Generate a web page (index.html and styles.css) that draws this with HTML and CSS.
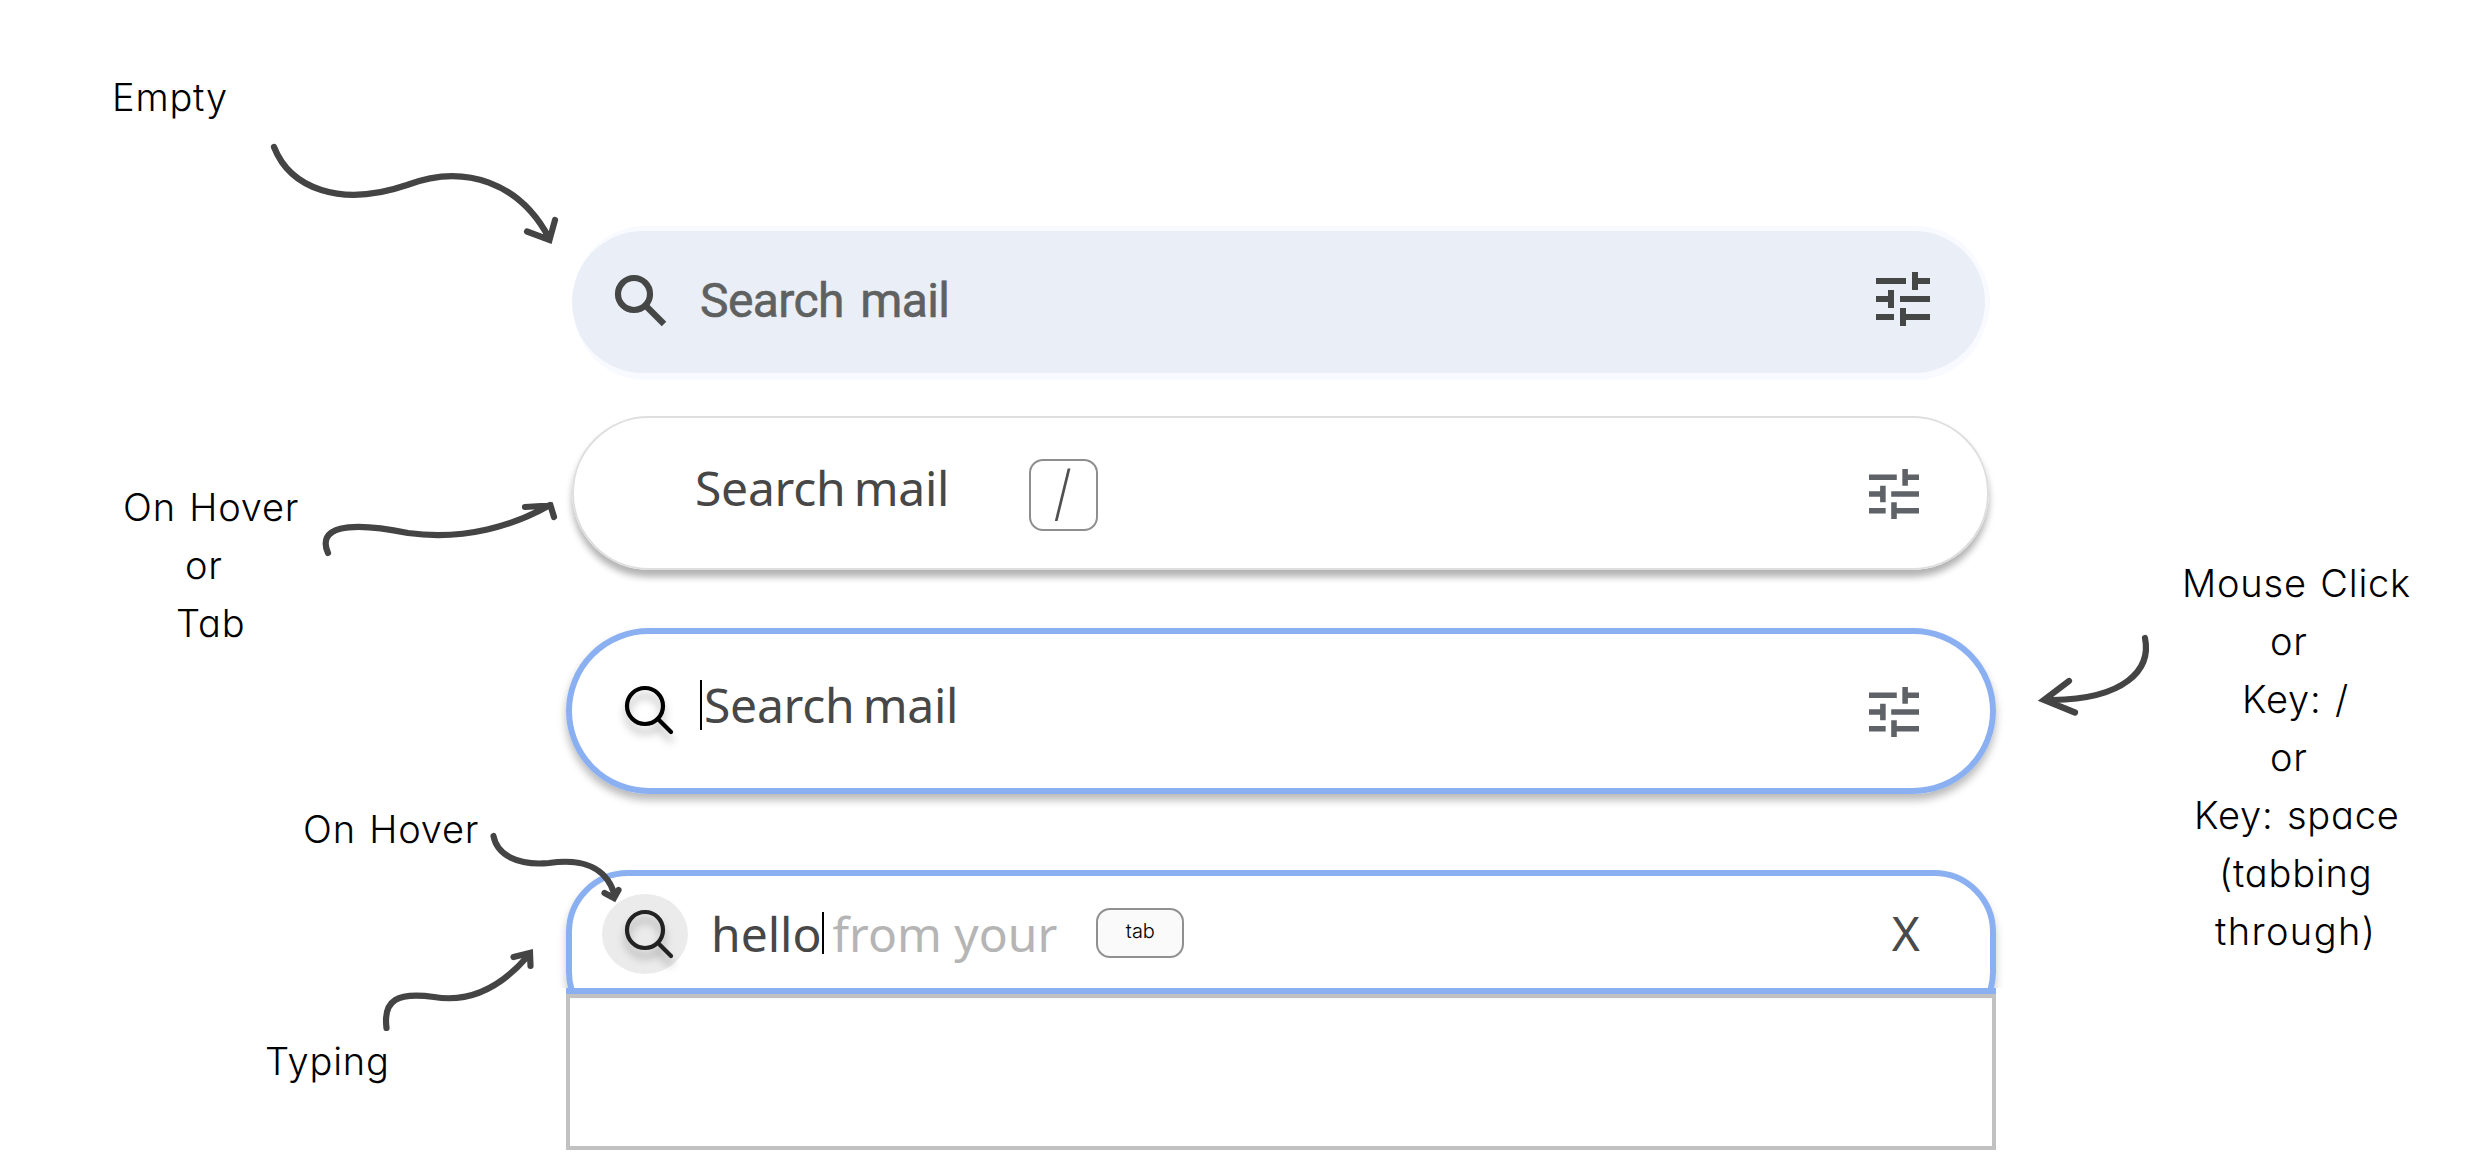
FILE: index.html
```html
<!DOCTYPE html>
<html lang="en">
<head>
<meta charset="utf-8">
<title>Search bar states</title>
<link rel="stylesheet" href="styles.css">
</head>
<body>
<main class="states">
  <div class="bar bar-empty">
    <svg class="icon-search-bold" width="54" height="54" viewBox="0 0 54 54"><circle cx="20" cy="20" r="16" fill="none" stroke="#444746" stroke-width="6.2"/><path d="M31 31 50 50" stroke="#444746" stroke-width="6.4"/></svg>
    <span class="hint hint-empty">Search mail</span>
    <svg class="tune tune-dark" width="54" height="54" viewBox="0 0 18 18"><path d="M0 2h10v2H0zM12 0h2v2h4v2h-4v2h-2zM4 6h2v6H4v-2H0V8h4zM8 8h10v2H8zM0 14h6v2H0zM8 12h2v2h8v2h-8v2H8z"/></svg>
  </div>
  <div class="bar bar-hover">
    <span class="hint hint-hover">Search mail</span>
    <kbd class="key key-slash"><span class="slash">/</span></kbd>
    <svg class="tune" width="50" height="50" viewBox="0 0 18 18"><path d="M0 2h10v2H0zM12 0h2v2h4v2h-4v2h-2zM4 6h2v6H4v-2H0V8h4zM8 8h10v2H8zM0 14h6v2H0zM8 12h2v2h8v2h-8v2H8z"/></svg>
  </div>
  <div class="bar bar-focus">
    <svg class="icon-search" width="50" height="50" viewBox="0 0 50 50"><circle cx="21" cy="21" r="18"/><path d="m34 34 13 13"/></svg>
    <i class="caret caret-tall"></i>
    <span class="hint hint-focus">Search mail</span>
    <svg class="tune" width="50" height="50" viewBox="0 0 18 18"><path d="M0 2h10v2H0zM12 0h2v2h4v2h-4v2h-2zM4 6h2v6H4v-2H0V8h4zM8 8h10v2H8zM0 14h6v2H0zM8 12h2v2h8v2h-8v2H8z"/></svg>
  </div>
  <div class="typing">
    <div class="clip">
      <div class="bar bar-typing">
        <span class="halo"><svg class="icon-search soft" width="50" height="50" viewBox="0 0 50 50"><circle cx="21" cy="21" r="18"/><path d="m34 34 13 13"/></svg></span>
        <span class="typed">hello</span>
        <i class="caret"></i>
        <span class="ghost">from your</span>
        <kbd class="key key-tab">tab</kbd>
        <span class="clear">X</span>
      </div>
    </div>
    <div class="results"></div>
  </div>
</main>

<p class="note n-empty">Empty</p>
<p class="note n-hover">On Hover</p>
<p class="note n-hover-or">or</p>
<p class="note n-hover-tab">Tab</p>
<p class="note n-icon">On Hover</p>
<p class="note n-typing">Typing</p>
<p class="note n-click">Mouse Click</p>
<p class="note n-click-or">or</p>
<p class="note n-slash">Key: /</p>
<p class="note n-slash-or">or</p>
<p class="note n-space">Key: space</p>
<p class="note n-tabbing">(tabbing</p>
<p class="note n-through">through)</p>

<svg class="arrows" width="2466" height="1168" viewBox="0 0 2466 1168">
  <path d="M274 147C290 188 340 208 407 185C465 163 520 183 549 238M527 231.500 549.500 240 555 220"/>
  <path d="M328 553C317 528 345 520 408 533C465 541 515 525 550 505M525 507 550.500 505.500 554 517"/>
  <path d="M493.500 836C497 855 518 866 549 863C583 858 606 868 614 893M604.500 893 614 898 618.500 890"/>
  <path d="M386.500 1028C383 1000 397 992 434 997C470 1003 500 988 527 957M513.500 957 530 953 530.500 966"/>
  <path d="M2078.500 638C2085 670 2058 699 1986 700" transform="translate(66.500 0)"/>
  <path d="M2069 681 2044 700 2075 712.500"/>
</svg>
</body>
</html>
```
FILE: styles.css
```css
* { box-sizing: border-box; }
body { margin: 0; width: 2466px; height: 1168px; position: relative; overflow: hidden; background: #fff; font-family: "Noto Sans", sans-serif; }
.states { width: 1430px; margin-left: 566px; padding-top: 230px; display: flex; flex-direction: column; align-items: flex-start; }
.bar { display: flex; align-items: flex-start; border-radius: 80px; }
.bar svg, .bar span, .bar kbd, .caret { flex: none; }
.tune { fill: #5f6368; margin-left: auto; display: block; }
.tune-dark { fill: #444746; }
.hint { font-size: 48px; line-height: 66px; letter-spacing: -.25px; color: #474747; white-space: pre; }
.bar-empty { width: 1413px; height: 142px; margin: 1px 0 0 6px; padding: 41px 55px 0 42px; background: #e9eef7; box-shadow: 5px 0 #f8faff, 2px -5px #f8faff, 2px 7px #f8faff; }
.icon-search-bold { margin-top: 2px; }
.hint-empty { margin: -4px 0 0 32px; font-family: Roboto, sans-serif; letter-spacing: -.6px; word-spacing: 5px; color: #5f6160; -webkit-text-stroke: .6px #5f6160; }
.bar-hover { width: 1417px; height: 154px; margin: 43px 0 0 6px; padding: 0 68px 0 121px; border: 2px solid #dedede; box-shadow: 0 7px 7px rgba(0,0,0,.3); }
.hint-hover { margin-top: 37px; word-spacing: -4px; }
.key { font-family: "Noto Sans", sans-serif; color: #505050; border: 2px solid #8e8e8e; text-align: center; }
.key-slash { width: 69px; height: 72px; margin: 41px 0 0 80px; border-radius: 14px; line-height: 66px; }
.slash { display: inline-block; margin-left: -3px; font-size: 73px; font-weight: 300; line-height: 64px; transform: scaleX(.66); }
.bar-hover .tune { margin-top: 51px; }
.bar-focus .tune { margin-top: 53px; }
.bar-focus { width: 1430px; height: 166px; margin-top: 58px; padding: 0 71px 0 52px; border: 6px solid #8bb0f2; border-radius: 83px; box-shadow: 0 6px 8px rgba(0,0,0,.28); }
.icon-search { fill: none; stroke: #000; stroke-width: 4.2; stroke-linecap: round; filter: drop-shadow(0 8px 4px rgba(0,0,0,.28)); }
.bar-focus .icon-search { margin-top: 51px; }
.caret { width: 2px; height: 42px; background: #000; }
.caret-tall { height: 50px; margin: 46px 0 0 26px; }
.hint-focus { margin: 38px 0 0 2px; word-spacing: -4px; }
.typing { margin-top: 72px; width: 1430px; }
.clip { height: 122px; overflow: hidden; margin: 0 -14px; padding: 4px 14px 0; }
.bar-typing { width: 1430px; height: 164px; padding: 0 70px 0 30px; border: 6px solid #8bb0f2; border-radius: 62px; box-shadow: 0 6px 8px rgba(0,0,0,.22); }
.halo { width: 86px; height: 80px; margin-top: 18px; border-radius: 50%; background: #ebebeb; padding: 15px 0 0 22px; }
.soft { display: block; stroke: #222; }
.typed, .ghost { font-size: 48px; line-height: 66px; color: #474747; margin-top: 25px; }
.typed { margin-left: 23px; }
.bar-typing .caret { margin: 36px 0 0 0; }
.ghost { color: #b5b5b5; margin-left: 9px; }
.key-tab { width: 88px; height: 50px; margin: 32px 0 0 39px; border-radius: 14px; font: 300 20px/42px Inter, sans-serif; color: #000; background: #fafafa; border-color: #909090; }
.clear { margin: 24px 0 0 auto; font-size: 48px; line-height: 66px; color: #4a4a4a; }
.results { height: 162px; border: 4px solid #c1c1c1; border-top: 0; position: relative; }
.results::before { content: ""; display: block; height: 10px; margin: 0 -4px; background: linear-gradient(#8bb0f2 6px, #c1c1c1 6px); }
.note { position: absolute; margin: 0; font: 300 38px/58px Inter, sans-serif; font-feature-settings: "cv11"; letter-spacing: .8px; word-spacing: 2px; color: #000; white-space: pre; }
.n-empty { left: 112px; top: 68px; }
.n-hover { left: 123px; top: 478px; }
.n-hover-or { left: 185px; top: 536px; }
.n-hover-tab { left: 176px; top: 594px; }
.n-icon { left: 303px; top: 800px; }
.n-typing { left: 265px; top: 1032px; }
.n-click { left: 2182px; top: 554px; }
.n-click-or { left: 2270px; top: 612px; }
.n-slash { left: 2242px; top: 670px; }
.n-slash-or { left: 2270px; top: 728px; }
.n-space { left: 2194px; top: 786px; }
.n-tabbing { left: 2219px; top: 844px; }
.n-through { left: 2215px; top: 902px; letter-spacing: 1.4px; }
.arrows { position: absolute; left: 0; top: 0; fill: none; stroke: #444; stroke-width: 6.2; stroke-linecap: round; pointer-events: none; }
```
